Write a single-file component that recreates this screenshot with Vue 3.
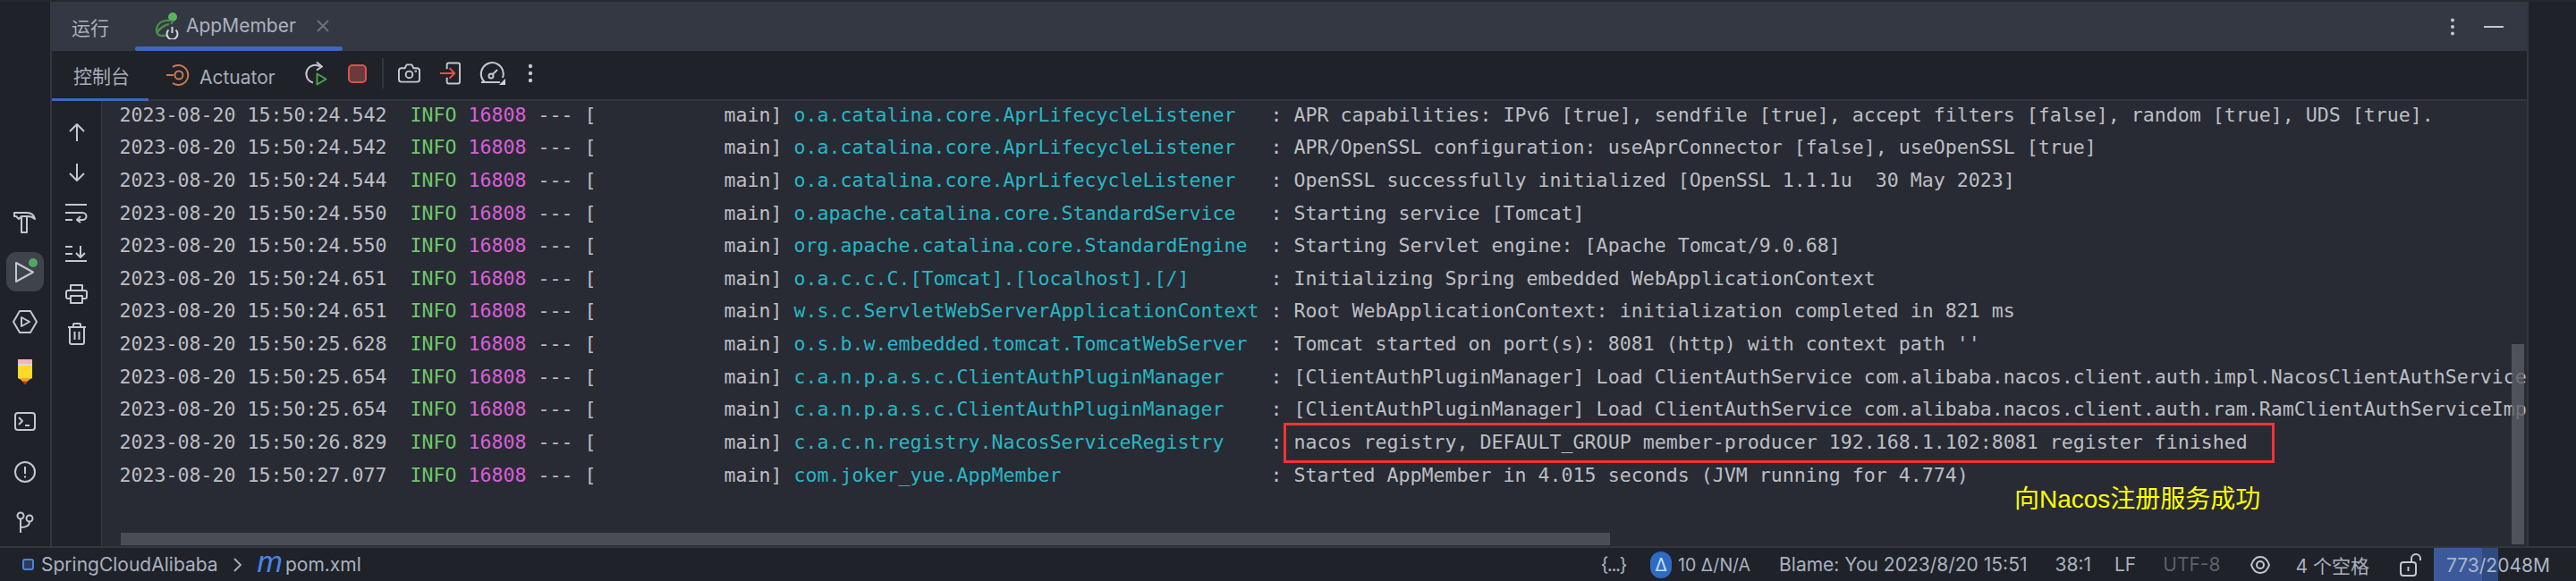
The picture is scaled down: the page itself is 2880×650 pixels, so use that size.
<script setup>
const raw = [
  ['24.542', 'o.a.catalina.core.AprLifecycleListener', 'APR capabilities: IPv6 [true], sendfile [true], accept filters [false], random [true], UDS [true].'],
  ['24.542', 'o.a.catalina.core.AprLifecycleListener', 'APR/OpenSSL configuration: useAprConnector [false], useOpenSSL [true]'],
  ['24.544', 'o.a.catalina.core.AprLifecycleListener', 'OpenSSL successfully initialized [OpenSSL 1.1.1u  30 May 2023]'],
  ['24.550', 'o.apache.catalina.core.StandardService', 'Starting service [Tomcat]'],
  ['24.550', 'org.apache.catalina.core.StandardEngine', 'Starting Servlet engine: [Apache Tomcat/9.0.68]'],
  ['24.651', 'o.a.c.c.C.[Tomcat].[localhost].[/]', 'Initializing Spring embedded WebApplicationContext'],
  ['24.651', 'w.s.c.ServletWebServerApplicationContext', 'Root WebApplicationContext: initialization completed in 821 ms'],
  ['25.628', 'o.s.b.w.embedded.tomcat.TomcatWebServer', "Tomcat started on port(s): 8081 (http) with context path ''"],
  ['25.654', 'c.a.n.p.a.s.c.ClientAuthPluginManager', '[ClientAuthPluginManager] Load ClientAuthService com.alibaba.nacos.client.auth.impl.NacosClientAuthServiceImpl success.'],
  ['25.654', 'c.a.n.p.a.s.c.ClientAuthPluginManager', '[ClientAuthPluginManager] Load ClientAuthService com.alibaba.nacos.client.auth.ram.RamClientAuthServiceImpl success.'],
  ['26.829', 'c.a.c.n.registry.NacosServiceRegistry', 'nacos registry, DEFAULT_GROUP member-producer 192.168.1.102:8081 register finished'],
  ['27.077', 'com.joker_yue.AppMember', 'Started AppMember in 4.015 seconds (JVM running for 4.774)'],
]
const rows = raw.map(([t, l, m]) => ({
  time: `2023-08-20 15:50:${t}  `,
  logger: l.padEnd(40, ' '),
  msg: ` : ${m}`,
}))
const sp = ' '
const mid = ' --- [           main] '
</script>

<template>
  <div class="ide">
    <div class="topline"></div>
    <div class="main">
      <aside class="rail">
        <div class="slot">
          <svg width="26" height="26" viewBox="0 0 26 26" class="ic"><path d="M1 3h14c4 0 8 2 9 7c-3-3-5-3-8-3h-1l0 0H9l-3 3l-3-3H1z"/><path d="M9 8v17h6V8"/></svg>
        </div>
        <div class="slot active">
          <svg width="32" height="32" viewBox="0 0 32 32" class="ic"><path d="M6 6v21l19-10.500z"/><circle cx="25" cy="6" r="5" class="dot"/></svg>
        </div>
        <div class="slot">
          <svg width="28" height="26" viewBox="0 0 28 26" class="ic"><path d="M8 1h12l7 12l-7 12H8L1 13z"/><path d="M10 8v10l9-5z"/></svg>
        </div>
        <div class="slot">
          <svg width="16" height="28" viewBox="0 0 16 28"><rect x="0" y="0" width="16" height="5" fill="#f4b6b6"/><rect x="0" y="5" width="16" height="2" fill="#d9d9d9"/><path d="M0 7h16v14l-8 4l-8-4z" fill="#ffd92e"/><path d="M2 21h12l-6 7z" fill="#f5a623"/><path d="M5 24.500h6l-3 3.500z" fill="#d92a1c"/></svg>
        </div>
        <div class="slot">
          <svg width="24" height="21" viewBox="0 0 24 21" class="ic"><rect x="1" y="1" width="22" height="19" rx="3"/><path d="M5 6l4 4l-4 4M12 15h5"/></svg>
        </div>
        <div class="slot">
          <svg width="24" height="24" viewBox="0 0 24 24" class="ic"><circle cx="12" cy="12" r="11"/><path d="M12 6v8M12 16.500v2"/></svg>
        </div>
        <div class="slot">
          <svg width="20" height="24" viewBox="0 0 20 24" class="ic"><circle cx="5" cy="5" r="3.500"/><circle cx="15" cy="8" r="3.500"/><path d="M5 9v15M5 18c6 0 10-1 10-6"/></svg>
        </div>
      </aside>

      <section class="panel">
        <header class="tabs">
          <div class="tab-label">运行</div>
          <div class="tab">
            <svg width="28" height="30" viewBox="0 0 28 30" class="spring">
              <circle cx="20" cy="5" r="5" fill="#57b45e"/>
              <path d="M20 9c0 2-1 3-2 4M17 9C9 8 2 12 2 20c0 4 3 6 6 6c3 0 6 0 7-1M3 22c4-6 8-8 13-9" fill="none" stroke="#4d8b50" stroke-width="2.400"/>
              <path d="M15.500 19.500a6 6 0 1 0 8 0" fill="none" stroke="#d3d6dc" stroke-width="2"/>
              <path d="M19.500 16v7" fill="none" stroke="#d3d6dc" stroke-width="2"/>
            </svg>
            <span class="tab-name">AppMember</span>
            <svg width="14" height="14" viewBox="0 0 14 14" class="close"><path d="M1 1l12 12M13 1L1 13"/></svg>
          </div>
          <div class="tabs-right">
            <svg width="6" height="20" viewBox="0 0 6 20" class="fill"><circle cx="3" cy="2.500" r="2"/><circle cx="3" cy="10" r="2"/><circle cx="3" cy="17.500" r="2"/></svg>
            <div class="minimize"></div>
          </div>
        </header>

        <div class="toolbar">
          <div class="console-tab">控制台</div>
          <svg width="26" height="24" viewBox="0 0 26 24" class="act"><path d="M0 12h8"/><circle cx="14" cy="12" r="4.500"/><path d="M7 3a11 11 0 1 1 0 18"/></svg>
          <span class="act-name">Actuator</span>
          <svg width="26" height="28" viewBox="0 0 26 28" class="rerun ic"><path d="M17 6.500a10 10 0 1 0-8 18"/><path d="M13 1.500l6 5l-6 4"/><path d="M13.500 14.500l10 6l-10 6z" class="go"/></svg>
          <div class="stop"></div>
          <div class="vsep"></div>
          <svg width="25" height="22" viewBox="0 0 26 22" class="cam ic"><path d="M4 5h4l2-4h6l2 4h4a3 3 0 0 1 3 3v10a3 3 0 0 1-3 3H4a3 3 0 0 1-3-3V8a3 3 0 0 1 3-3z"/><circle cx="13" cy="12.500" r="4"/><circle cx="20.500" cy="8.500" r="0.500"/></svg>
          <svg width="23" height="26" viewBox="0 0 24 26" class="exit ic"><path d="M8 8V3a2 2 0 0 1 2-2h11a2 2 0 0 1 2 2v20a2 2 0 0 1-2 2H10a2 2 0 0 1-2-2v-5"/><path d="M0 13h17M11 7l6 6l-6 6" class="redline"/></svg>
          <svg width="30" height="26" viewBox="0 0 30 26" class="gauge ic"><path d="M6 22a12.500 12.500 0 1 1 20-5M2 22h21" /><circle cx="13" cy="15" r="2.500"/><path d="M15 13l5-5"/><path d="M29 18v7h-7z" class="tri"/></svg>
          <svg width="6" height="22" viewBox="0 0 6 22" class="fill kebab"><circle cx="3" cy="3" r="2.200"/><circle cx="3" cy="11" r="2.200"/><circle cx="3" cy="19" r="2.200"/></svg>
        </div>

        <div class="body">
          <div class="gutter">
            <div class="gslot"><svg width="18" height="20" viewBox="0 0 18 20" class="ic"><path d="M9 20V1M1 9l8-8l8 8"/></svg></div>
            <div class="gslot"><svg width="18" height="20" viewBox="0 0 18 20" class="ic"><path d="M9 0v19M1 11l8 8l8-8"/></svg></div>
            <div class="gslot"><svg width="25" height="22" viewBox="0 0 25 22" class="ic"><path d="M0 2h24M0 11h19c6 0 6 8 0 8h-6M17 15l-4 4l4 3M0 19h8"/></svg></div>
            <div class="gslot"><svg width="25" height="20" viewBox="0 0 25 20" class="ic"><path d="M0 2h8M0 10h8M0 18h24M17 1v13M12 9l5 5l5-5"/></svg></div>
            <div class="gslot"><svg width="25" height="22" viewBox="0 0 25 22" class="ic"><path d="M6 7V1h13v6M6 16H3a2 2 0 0 1-2-2V9a2 2 0 0 1 2-2h19a2 2 0 0 1 2 2v5a2 2 0 0 1-2 2h-3"/><rect x="6" y="13" width="13" height="8"/></svg></div>
            <div class="gslot"><svg width="22" height="25" viewBox="0 0 22 25" class="ic"><path d="M1 5h20M7 5V2a1 1 0 0 1 1-1h6a1 1 0 0 1 1 1v3M3 5v17a2 2 0 0 0 2 2h12a2 2 0 0 0 2-2V5M8.500 10v9M13.500 10v9"/></svg></div>
          </div>

          <div class="console">
            <div class="log">
              <div v-for="(r, i) in rows" :key="i" class="row"><span>{{ r.time }}</span><span class="info">INFO</span><span>{{ sp }}</span><span class="pid">16808</span><span>{{ mid }}</span><span class="logger">{{ r.logger }}</span><span>{{ r.msg }}</span></div>
            </div>
            <div class="redbox"></div>
            <div class="note">向Nacos注册服务成功</div>
            <div class="vbar"></div>
            <div class="hbar"></div>
          </div>
        </div>
      </section>
      <div class="right-strip"></div>
    </div>

    <footer class="status">
      <div class="crumb">
        <span class="mod"></span>
        <span>SpringCloudAlibaba</span>
        <svg width="10" height="16" viewBox="0 0 10 16" class="chev"><path d="M1 1l7 7l-7 7"/></svg>
        <span class="m">m</span>
        <span>pom.xml</span>
      </div>
      <div class="st-right">
        <span class="st s1">{...}</span>
        <span class="badge s2">Δ</span>
        <span class="st s3">10 Δ/N/A</span>
        <span class="st s4">Blame: You 2023/8/20 15:51</span>
        <span class="st s5">38:1</span>
        <span class="st s6">LF</span>
        <span class="st s7 dim">UTF-8</span>
        <svg width="22" height="20" viewBox="0 0 22 20" class="ic s8"><path d="M1 10C3 4 7 1 11 1s8 3 10 9c-2 6-6 9-10 9S3 16 1 10z"/><circle cx="11" cy="10" r="4"/></svg>
        <span class="st s9">4 个空格</span>
        <svg width="25" height="26" viewBox="0 0 25 26" class="ic s10"><rect x="1" y="10" width="17" height="15" rx="3"/><path d="M13 10V6a5 5 0 0 1 10 0v2M9.500 15v5"/></svg>
        <div class="mem"><div class="mem-a"></div><div class="mem-b"></div><span class="mem-t">773/2048M</span></div>
      </div>
    </footer>
  </div>
</template>

<style scoped>
.ide {
  width: 2880px;
  height: 650px;
  display: flex;
  flex-direction: column;
  overflow: hidden;
  background: #1f2229;
  font-family: Inter, "Noto Sans CJK SC", sans-serif;
  color: #b3b9c5;
}
.topline { height: 2px; background: #26282f; flex: none; }
.main { flex: 1; display: flex; min-height: 0; }
.rail {
  width: 56px;
  flex: none;
  border-right: 2px solid #33363e;
  padding-top: 217.5px;
  display: flex;
  flex-direction: column;
  align-items: center;
  box-sizing: content-box;
}
.slot {
  height: 56px;
  width: 42px;
  display: flex;
  align-items: center;
  justify-content: center;
  flex: none;
}
.slot.active { position: relative; }
.slot.active::before {
  content: "";
  position: absolute;
  inset: 6px 0 6px 0;
  background: #3f434c;
  border-radius: 11px;
}
.slot.active svg { position: relative; }
.ic { fill: none; stroke: #c4c7cd; stroke-width: 2; stroke-linejoin: round; overflow: visible; }
.ic .dot { fill: #4fa85f; stroke: none; }
.ic .go { stroke: #4f9f52; }
.ic .redline { stroke: #d9534f; }
.ic .tri { fill: #d0d3d8; stroke: none; }
.fill { fill: #c4c7cd; }

.panel { width: 2767px; flex: none; display: flex; flex-direction: column; min-width: 0; }
.tabs {
  height: 55px;
  flex: none;
  background: #333842;
  display: flex;
  align-items: center;
  font-size: 21px;
}
.tab-label { width: 93px; padding-left: 22px; box-sizing: border-box; color: #aab1be; }
.tab {
  width: 232px;
  height: 100%;
  box-sizing: border-box;
  padding-left: 22px;
  padding-bottom: 2px;
  position: relative;
  display: flex;
  align-items: center;
}
.tab::after {
  content: "";
  position: absolute;
  left: 0;
  right: 0;
  bottom: 0;
  height: 5px;
  border-radius: 3px;
  background: #3d69bd;
}
.tab-name { margin-left: 7px; color: #aab1be; }
.close { margin-left: 23px; fill: none; stroke: #6d717b; stroke-width: 2; }
.spring { flex: none; }
.tabs-right {
  margin-left: auto;
  display: flex;
  align-items: center;
  padding-right: 26px;
}
.minimize { width: 22px; height: 2px; background: #c4c7cd; margin-left: 32px; }

.toolbar {
  height: 56px;
  flex: none;
  box-sizing: border-box;
  border-bottom: 2px solid #33363e;
  background: #1f2229;
  display: flex;
  align-items: center;
  font-size: 21px;
  position: relative;
}
.console-tab {
  width: 108px;
  height: 54px;
  line-height: 58px;
  box-sizing: border-box;
  padding-left: 24px;
  color: #a6adb9;
  position: relative;
}
.console-tab::after {
  content: "";
  position: absolute;
  left: 0;
  right: 0;
  bottom: -2px;
  height: 3px;
  background: #3d69bd;
}
.act { margin-left: 20px; fill: none; stroke: #c9794f; stroke-width: 2; }
.act-name { margin-left: 11px; color: #a6adb9; margin-top: 4px; }
.rerun { margin-left: 33px; margin-top: -4px; }
.stop {
  width: 21px;
  height: 21px;
  box-sizing: border-box;
  margin-left: 22px;
  margin-top: -4px;
  border: 2px solid #d9534f;
  border-radius: 5px;
  background: #6a3b3d;
}
.vsep { width: 2px; height: 34px; background: #33363e; margin-left: 17px; margin-top: -4px; }
.cam { margin-left: 16px; margin-top: -4px; }
.exit { margin-left: 22px; margin-top: -4px; }
.gauge { margin-left: 21px; margin-top: -2px; }
.kebab { margin-left: 24px; margin-top: -4px; }

.body { flex: 1; display: flex; min-height: 0; }
.gutter {
  width: 56px;
  flex: none;
  box-sizing: border-box;
  border-right: 1px solid #33363e;
  padding-top: 12.4px;
  display: flex;
  flex-direction: column;
}
.gslot { height: 45.2px; flex: none; display: flex; align-items: center; justify-content: center; }
.console {
  flex: 1;
  min-width: 0;
  background: #282b33;
  position: relative;
  overflow: hidden;
}
.log {
  margin-top: -2.3px;
  padding-left: 19.5px;
  font-family: "DejaVu Sans Mono", monospace;
  font-size: 21.6px;
  line-height: 36.64px;
  white-space: pre;
  color: #bcbec4;
}
.row { height: 36.64px; }
.info { color: #6fc76b; }
.pid { color: #d95fd8; }
.logger { color: #27b6c6; }
.redbox {
  position: absolute;
  left: 1321px;
  top: 360px;
  width: 1108px;
  height: 45px;
  box-sizing: border-box;
  border: 3px solid #f33333;
}
.note {
  position: absolute;
  left: 2138px;
  top: 426px;
  font-size: 28px;
  line-height: 40px;
  color: #ffff00;
  font-family: "Liberation Sans", "Noto Sans CJK SC", sans-serif;
}
.vbar {
  position: absolute;
  left: 2694px;
  top: 272px;
  width: 14px;
  height: 224px;
  background: #5a5d65;
  opacity: 0.8;
}
.hbar {
  position: absolute;
  left: 21px;
  top: 483px;
  width: 1665px;
  height: 14px;
  background: #4a4d55;
}
.right-strip { flex: 1; border-left: 2px solid #33363e; }

.status {
  height: 39px;
  flex: none;
  box-sizing: border-box;
  border-top: 2px solid #33363e;
  background: #1f2229;
  display: flex;
  align-items: center;
  font-size: 21px;
  color: #a9b1bf;
}
.crumb { display: flex; align-items: center; padding-left: 25px; }
.mod {
  width: 13px;
  height: 13px;
  box-sizing: border-box;
  border: 2px solid #4b82e0;
  border-radius: 3px;
  background: #2b3a5a;
  margin-right: 8px;
}
.chev { margin: 0 17px; fill: none; stroke: #a9b1bf; stroke-width: 1.800; }
.m {
  font-style: italic;
  font-size: 34px;
  line-height: 30px;
  color: #4a83e8;
  margin-right: 3px;
  margin-top: -8px;
  font-family: "Liberation Sans", sans-serif;
}
.st-right { margin-left: auto; display: flex; align-items: center; height: 100%; }
.st { white-space: nowrap; }
.dim { color: #5b606b; }
.s1 { letter-spacing: -1.5px; }
.badge {
  width: 24px;
  height: 30px;
  border-radius: 12px;
  background: #2f6ac4;
  color: #bfe0ff;
  display: flex;
  align-items: center;
  justify-content: center;
  font-size: 20px;
}
.s2 { margin-left: 27px; }
.s3 { margin-left: 7px; font-size: 19.5px; }
.s4 { margin-left: 32px; }
.s5 { margin-left: 31px; }
.s6 { margin-left: 26px; }
.s7 { margin-left: 30px; }
.s8 { margin-left: 33px; }
.s9 { margin-left: 29px; }
.s10 { margin-left: 34px; }
.mem {
  position: relative;
  width: 159px;
  height: 100%;
  margin-left: 13px;
  display: flex;
  align-items: center;
}
.mem-a { width: 54px; height: 100%; background: #3c5a9b; flex: none; }
.mem-b { width: 18px; height: 100%; background: #2f4a80; flex: none; }
.mem-t { position: absolute; left: 14px; top: 50%; transform: translateY(-50%); color: #a9b5c9; }
</style>
